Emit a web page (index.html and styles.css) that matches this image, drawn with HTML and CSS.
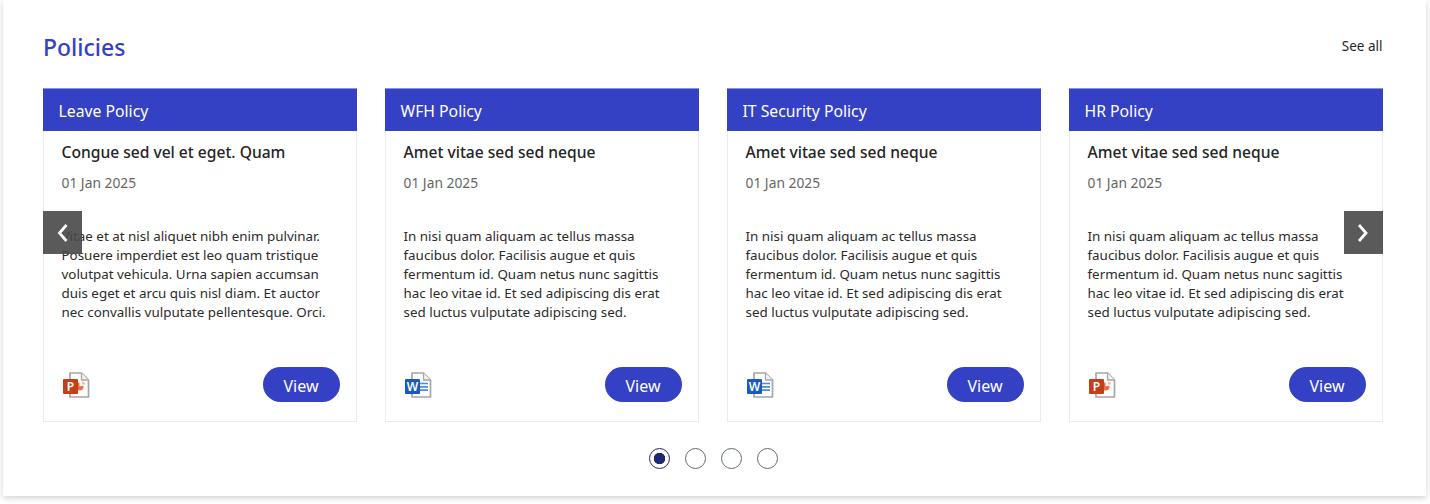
FILE: index.html
```html
<!DOCTYPE html>
<html lang="en">
<head>
<meta charset="utf-8">
<title>Policies</title>
<link rel="stylesheet" href="styles.css">
</head>
<body>
<section class="panel">
  <header class="panel-head">
    <h1 class="panel-title">Policies</h1>
    <a class="see-all" href="#">See all</a>
  </header>
  <div class="carousel">
    <article class="card">
      <h2 class="card-head">Leave Policy</h2>
      <div class="card-body">
        <h3 class="card-title">Congue sed vel et eget. Quam</h3>
        <p class="card-date">01 Jan 2025</p>
        <p class="card-text">Vitae et at nisl aliquet nibh enim pulvinar. Posuere imperdiet est leo quam tristique volutpat vehicula. Urna sapien accumsan duis eget et arcu quis nisl diam. Et auctor nec convallis vulputate pellentesque. Orci.</p>
        <div class="card-foot">
          <svg class="file-icon" viewBox="0 0 28 28"><path class="doc" d="M8 2h11.500l7 7v17H8z"/><path class="doc-fold" d="M19.500 2v7h7"/><path d="M21.500 14.500a4 4 0 1 1-4-3v4z" fill="#ed6c47"/><path d="M20 10.500a3 3 0 0 1 3 3h-3z" fill="#ffb9a3"/><rect x="1" y="8" width="15" height="15" rx="1" fill="#c43e1c"/><text class="file-letter" x="8.500" y="20">P</text></svg>
          <a class="view-btn" href="#">View</a>
        </div>
      </div>
    </article>
    <article class="card">
      <h2 class="card-head">WFH Policy</h2>
      <div class="card-body">
        <h3 class="card-title">Amet vitae sed sed neque</h3>
        <p class="card-date">01 Jan 2025</p>
        <p class="card-text">In nisi quam aliquam ac tellus massa faucibus dolor. Facilisis augue et quis fermentum id. Quam netus nunc sagittis hac leo vitae id. Et sed adipiscing dis erat sed luctus vulputate adipiscing sed.</p>
        <div class="card-foot">
          <svg class="file-icon" viewBox="0 0 28 28"><path class="doc" d="M8 2h11.500l7 7v17H8z"/><path class="doc-fold" d="M19.500 2v7h7"/><path class="doc-lines" d="M16 12.500h8M16 15.800h8M16 19.100h8"/><rect x="1" y="8" width="15" height="15" rx="1" fill="#185abd"/><text class="file-letter" x="8.500" y="20">W</text></svg>
          <a class="view-btn" href="#">View</a>
        </div>
      </div>
    </article>
    <article class="card">
      <h2 class="card-head">IT Security Policy</h2>
      <div class="card-body">
        <h3 class="card-title">Amet vitae sed sed neque</h3>
        <p class="card-date">01 Jan 2025</p>
        <p class="card-text">In nisi quam aliquam ac tellus massa faucibus dolor. Facilisis augue et quis fermentum id. Quam netus nunc sagittis hac leo vitae id. Et sed adipiscing dis erat sed luctus vulputate adipiscing sed.</p>
        <div class="card-foot">
          <svg class="file-icon" viewBox="0 0 28 28"><path class="doc" d="M8 2h11.500l7 7v17H8z"/><path class="doc-fold" d="M19.500 2v7h7"/><path class="doc-lines" d="M16 12.500h8M16 15.800h8M16 19.100h8"/><rect x="1" y="8" width="15" height="15" rx="1" fill="#185abd"/><text class="file-letter" x="8.500" y="20">W</text></svg>
          <a class="view-btn" href="#">View</a>
        </div>
      </div>
    </article>
    <article class="card">
      <h2 class="card-head">HR Policy</h2>
      <div class="card-body">
        <h3 class="card-title">Amet vitae sed sed neque</h3>
        <p class="card-date">01 Jan 2025</p>
        <p class="card-text">In nisi quam aliquam ac tellus massa faucibus dolor. Facilisis augue et quis fermentum id. Quam netus nunc sagittis hac leo vitae id. Et sed adipiscing dis erat sed luctus vulputate adipiscing sed.</p>
        <div class="card-foot">
          <svg class="file-icon" viewBox="0 0 28 28"><path class="doc" d="M8 2h11.500l7 7v17H8z"/><path class="doc-fold" d="M19.500 2v7h7"/><path d="M21.500 14.500a4 4 0 1 1-4-3v4z" fill="#ed6c47"/><path d="M20 10.500a3 3 0 0 1 3 3h-3z" fill="#ffb9a3"/><rect x="1" y="8" width="15" height="15" rx="1" fill="#c43e1c"/><text class="file-letter" x="8.500" y="20">P</text></svg>
          <a class="view-btn" href="#">View</a>
        </div>
      </div>
    </article>
    <button class="arrow arrow-prev" aria-label="Previous"><svg viewBox="0 0 12 18"><path d="M9.500 1 2.500 9l7 8"/></svg></button>
    <button class="arrow arrow-next" aria-label="Next"><svg viewBox="0 0 12 18"><path d="M2 1l7 8-7 8"/></svg></button>
  </div>
  <div class="dots">
    <span class="dot dot-active"></span>
    <span class="dot"></span>
    <span class="dot"></span>
    <span class="dot"></span>
  </div>
</section>
</body>
</html>
```
FILE: styles.css
```css
* { box-sizing: border-box; }
html, body { margin: 0; background: #fff; }
body { font-family: "Noto Sans", "Open Sans", "Liberation Sans", sans-serif; color: #242424; overflow: hidden; }
.panel {
  margin: 0 4px 8px 3px;
  height: 496px;
  padding: 0 43.5px 0 40px;
  background: #fff;
  box-shadow: 0 2px 6px rgba(0,0,0,.18);
}
.panel-head { display: flex; justify-content: space-between; align-items: center; height: 88px; padding-top: 6px; }
.panel-title { margin: 0; font-size: 23px; font-weight: 500; color: #3541c4; }
.see-all { font-size: 13.5px; color: #242424; text-decoration: none; margin-top: -2px; }
.carousel { position: relative; display: grid; grid-template-columns: repeat(4, 313.5px); column-gap: 28.5px; }
.card { display: flex; flex-direction: column; height: 334px; border: 1px solid #ececec; border-top: 0; }
.card-head { margin: 0 -1px; height: 43px; padding: 2px 15.5px 0; display: flex; align-items: center; background: #3541c4; color: #fff; font-size: 15.75px; font-weight: 400; border-top: 1px solid #8a92dd; }
.card-body { flex: 1; display: flex; flex-direction: column; padding: 0 15.5px 19px 17.5px; }
.card-title { margin: 10px 0 0; font-size: 15.6px; line-height: 22px; font-weight: 500; color: #242424; }
.card-date { margin: 9px 0 0; font-size: 13.8px; line-height: 22px; color: #666; }
.card-text { margin: 33px 0 0; font-size: 13.4px; line-height: 19px; color: #2b2b2b; }
.card-foot { margin-top: auto; display: flex; justify-content: space-between; align-items: center; }
.file-icon { width: 28px; height: 28px; }
.doc { fill: #fff; stroke: #a6a6a6; stroke-width: 1.7; stroke-linejoin: round; }
.doc-fold { fill: #f2f2f2; stroke: #a6a6a6; stroke-width: 1.3; stroke-linejoin: round; }
.doc-lines { fill: none; stroke: #4a8fdc; stroke-width: 1.7; }
.file-letter { font-size: 12px; font-weight: 600; fill: #fff; text-anchor: middle; }
.view-btn { width: 77px; height: 35px; padding: 2px 1px 0 0; display: flex; align-items: center; justify-content: center; border-radius: 18px; background: #3541c4; color: #fff; font-size: 16px; text-decoration: none; }
.arrow { position: absolute; top: 123px; width: 39px; height: 43px; padding: 0; border: 0; background: rgba(72,72,72,.9); display: flex; align-items: center; justify-content: center; }
.arrow svg { width: 12px; height: 18px; fill: none; stroke: #fff; stroke-width: 2.8; }
.arrow-prev { left: 0; }
.arrow-next { right: 0; }
.dots { display: flex; justify-content: center; gap: 15px; margin-top: 26px; padding-left: 1px; }
.dot { width: 21px; height: 21px; border-radius: 50%; border: 1px solid #5f6b73; background: #fff; }
.dot-active { border-color: #1f2a6e; background: radial-gradient(circle, #1f2a6e 0 5.5px, #fff 6px); }
```
